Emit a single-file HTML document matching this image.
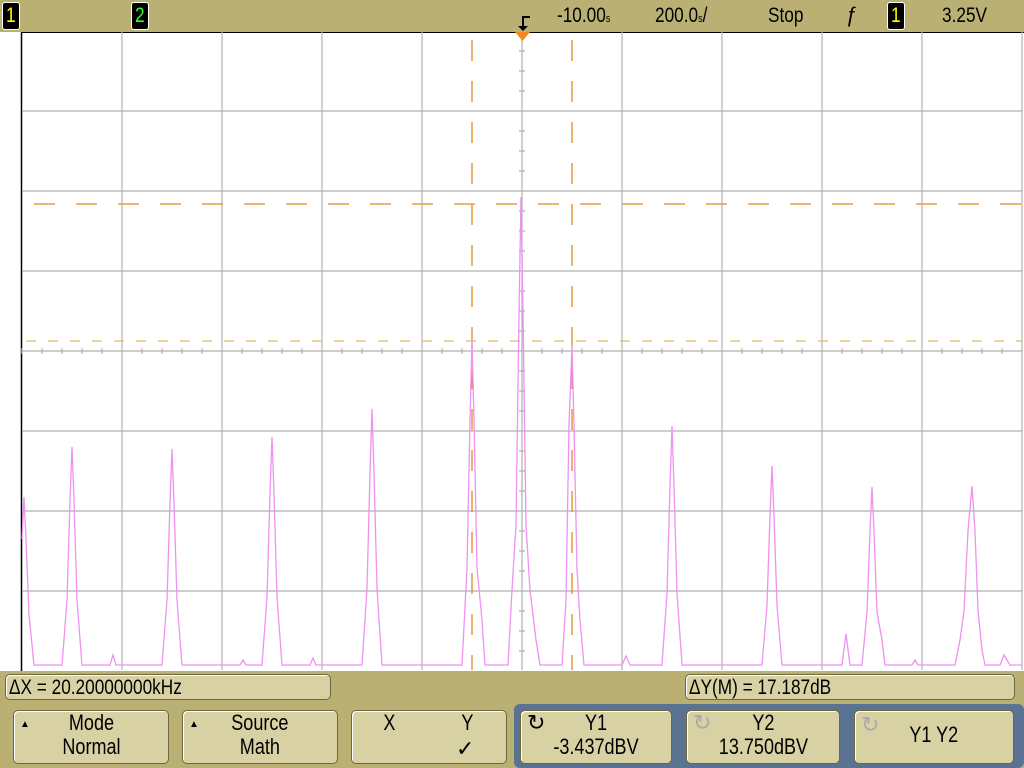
<!DOCTYPE html>
<html><head><meta charset="utf-8"><style>
body{margin:0;width:1024px;height:768px;background:#bab073;overflow:hidden;position:relative;font-family:"Liberation Sans Narrow","Liberation Sans",sans-serif;}
.t{position:absolute;font-size:21px;color:#000;white-space:nowrap}
.c{display:inline-block;transform:scaleX(0.82);transform-origin:left center}
.cc{display:inline-block;transform:scaleX(0.82);transform-origin:center center}
.ch{position:absolute;top:2px;width:16px;height:26px;background:#000;border-radius:3px;border:1px solid #fff;font-size:21px;text-align:center;line-height:26px}
.box{position:absolute;background:#d8d1a4;border:1px solid #6e6840;border-radius:5px;box-shadow:inset 1px 1px 0 #fff;}
.btn{position:absolute;top:710px;height:52px;background:#d8d1a4;border:1px solid #6e6840;border-radius:5px;box-shadow:inset 1px 1px 0 #fff;font-size:22px;text-align:center;line-height:24px}
</style></head><body>
<div class="ch" style="left:2px;color:#ff0"><span class="cc">1</span></div>
<div class="ch" style="left:131px;color:#3f3"><span class="cc">2</span></div>
<div class="t" style="left:557px;top:4px"><span class="c">-10.00<span style="font-size:11px">s</span></span></div>
<div class="t" style="left:655px;top:4px"><span class="c">200.0<span style="font-size:11px">s</span>/</span></div>
<div class="t" style="left:768px;top:4px"><span class="c">Stop</span></div>
<div class="t" style="left:846px;top:4px">ƒ</div>
<div class="ch" style="left:887px;color:#ff0"><span class="cc">1</span></div>
<div class="t" style="left:942px;top:4px"><span class="c">3.25V</span></div>
<svg style="position:absolute;left:0;top:0" width="1024" height="768">
<path d="M522 16h8v2h-6v8h4l-5 5-5-5h4z" fill="#000"/>
<rect x="0" y="32" width="1024" height="639" fill="#fff"/>
<line x1="21.5" y1="32" x2="21.5" y2="671" stroke="#000" stroke-width="1.5"/>
<line x1="21" y1="32.5" x2="1024" y2="32.5" stroke="#000"/>
<g stroke="#b0b0b0" stroke-width="1.2">
<path d="M122 32V670M222 32V670M322 32V670M422 32V670M522 32V670M622 32V670M722 32V670M822 32V670M922 32V670M1022 32V670"/>
<path d="M22 111H1022M22 191H1022M22 271H1022M22 351H1022M22 431H1022M22 511H1022M22 591H1022"/>
<path d="M22 348v6M42 348v6M62 348v6M82 348v6M102 348v6M142 348v6M162 348v6M182 348v6M202 348v6M242 348v6M262 348v6M282 348v6M302 348v6M342 348v6M362 348v6M382 348v6M402 348v6M442 348v6M462 348v6M482 348v6M502 348v6M542 348v6M562 348v6M582 348v6M602 348v6M642 348v6M662 348v6M682 348v6M702 348v6M742 348v6M762 348v6M782 348v6M802 348v6M842 348v6M862 348v6M882 348v6M902 348v6M942 348v6M962 348v6M982 348v6M1002 348v6"/>
<path d="M519 51h6M519 71h6M519 91h6M519 131h6M519 151h6M519 171h6M519 211h6M519 231h6M519 251h6M519 291h6M519 311h6M519 331h6M519 371h6M519 391h6M519 411h6M519 451h6M519 471h6M519 491h6M519 531h6M519 551h6M519 571h6M519 611h6M519 631h6M519 651h6"/>
</g>
<line x1="34" y1="204" x2="1022" y2="204" stroke="#e08a20" stroke-width="1.3" stroke-dasharray="21,21"/>
<line x1="26" y1="341" x2="1022" y2="341" stroke="#e8b860" stroke-width="1.3" stroke-dasharray="10,12"/>
<line x1="472" y1="40" x2="472" y2="670" stroke="#e08a20" stroke-width="1.3" stroke-dasharray="21,20"/>
<line x1="572" y1="40" x2="572" y2="670" stroke="#e08a20" stroke-width="1.3" stroke-dasharray="21,20"/>
<path d="M515 32h15l-7.5 9z" fill="#f08820"/>
<polyline fill="none" stroke="#f090f0" stroke-width="1.3" points="22,539 24,497 26,539 29,615 34,665 62,665 67,600 70,501 72,447 74,501 77,600 82,665 110,665 113,655 116,665 162,665 167,600 170,503 172,449 174,503 177,600 180,640 182,665 240,665 243,660 246,665 262,665 267,597 270,494 272,437 274,494 277,597 282,665 310,665 313,658 316,665 362,665 367,588 370,473 372,409 374,473 377,588 382,665 462,665 467,568 470,421 472,340 474,421 477,568 482,620 485,665 508,665 512,590 516,525 519,314 521,197 523,314 526,525 530,590 536,640 540,665 562,665 566,600 569,425 572,345 574,425 577,569 580,620 584,665 622,665 626,656 630,665 662,665 667,593 670,486 672,426 674,486 677,593 682,665 762,665 767,605 770,516 772,466 774,516 777,605 782,665 842,665 846,634 850,665 862,665 867,612 870,532 872,487 874,532 877,612 882,640 885,665 912,665 915,660 918,665 955,665 960,640 964,611 968,531 972,486 975,531 978,611 982,650 985,665 1000,665 1004,655 1010,665 1022,665"/>
</svg>
<div class="box t" style="left:5px;top:674px;width:326px;height:26px;line-height:26px;font-size:21px;padding-left:3px;box-sizing:border-box"><span class="c">ΔX = 20.20000000kHz</span></div>
<div class="box t" style="left:685px;top:674px;width:330px;height:26px;line-height:26px;font-size:21px;padding-left:3px;box-sizing:border-box"><span class="c">ΔY(M) = 17.187dB</span></div>
<div style="position:absolute;left:514px;top:704px;width:510px;height:64px;background:#5a7392;border-radius:6px"></div>
<div class="btn" style="left:13px;width:154px"><span style="position:absolute;left:6px;top:2px;font-size:10px">▲</span><span class="cc">Mode<br>Normal</span></div>
<div class="btn" style="left:182px;width:154px"><span style="position:absolute;left:6px;top:2px;font-size:10px">▲</span><span class="cc">Source<br>Math</span></div>
<div class="btn" style="left:351px;width:154px"><span style="position:absolute;left:30px;top:0" class="cc">X</span><span style="position:absolute;left:108px;top:0" class="cc">Y</span><span style="position:absolute;left:104px;top:26px">✓</span></div>
<div class="btn" style="left:520px;width:150px"><span style="position:absolute;left:6px;top:0">↻</span><span class="cc">Y1<br>-3.437dBV</span></div>
<div class="btn" style="left:686px;width:152px"><span style="position:absolute;left:6px;top:0;color:#aaa">↻</span><span class="cc">Y2<br>13.750dBV</span></div>
<div class="btn" style="left:854px;width:158px;line-height:48px"><span style="position:absolute;left:6px;top:-10px;color:#aaa">↻</span><span class="cc">Y1 Y2</span></div>
</body></html>
